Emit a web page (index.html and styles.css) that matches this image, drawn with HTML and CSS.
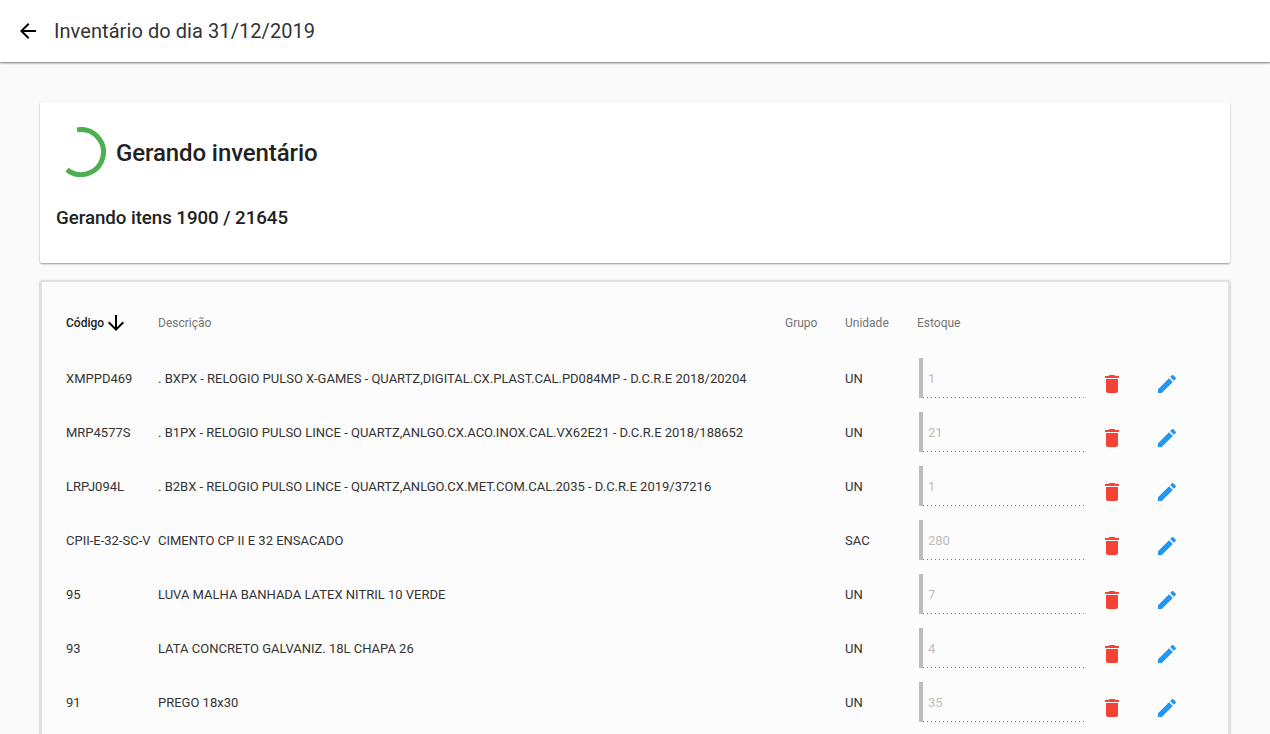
FILE: index.html
```html
<!DOCTYPE html>
<html lang="pt">
<head>
    <meta charset="UTF-8">
    <title>Inventário do dia 31/12/2019</title>
    <link rel="stylesheet" href="styles.css">
</head>
<body>
    <header class="toolbar">
        <svg class="back-icon" viewBox="0 0 24 24"><path d="M20 11H7.83l5.59-5.59L12 4l-8 8 8 8 1.41-1.41L7.83 13H20v-2z"/></svg>
        <span class="toolbar-title">Inventário do dia 31/12/2019</span>
    </header>
    <main class="content">
        <section class="card status-card">
            <div class="status-head">
                <svg class="spinner" viewBox="0 0 50 50"><path d="M21 2.9 A22.5 22.5 0 1 1 11 42.7"/></svg>
                <h2>Gerando inventário</h2>
            </div>
            <h3 class="status-text">Gerando itens 1900 / 21645</h3>
        </section>
        <section class="card list-card">
            <div class="row head-row">
                <div class="sorted">Código<svg class="sort-icon" viewBox="0 0 24 24"><path d="M20 12l-1.41-1.41L13 16.17V4h-2v12.17l-5.58-5.59L4 12l8 8 8-8z"/></svg></div>
                <div>Descrição</div>
                <div>Grupo</div>
                <div>Unidade</div>
                <div>Estoque</div>
            </div>
            <div class="row item-row">
                <div>XMPPD469</div>
                <div>. BXPX - RELOGIO PULSO X-GAMES - QUARTZ,DIGITAL.CX.PLAST.CAL.PD084MP - D.C.R.E 2018/20204</div>
                <div></div>
                <div>UN</div>
                <div class="stock">1</div>
                <svg class="icon trash" viewBox="0 0 24 24"><path d="M6 19c0 1.1.9 2 2 2h8c1.1 0 2-.9 2-2V7H6v12zM19 4h-3.5l-1-1h-5l-1 1H5v2h14V4z"/></svg>
                <svg class="icon pencil" viewBox="0 0 24 24"><path d="M3 17.25V21h3.75L17.81 9.94l-3.75-3.75L3 17.25zM20.71 7.04c.39-.39.39-1.02 0-1.41l-2.34-2.34c-.39-.39-1.02-.39-1.41 0l-1.83 1.83 3.75 3.75 1.83-1.83z"/></svg>
            </div>
            <div class="row item-row">
                <div>MRP4577S</div>
                <div>. B1PX - RELOGIO PULSO LINCE - QUARTZ,ANLGO.CX.ACO.INOX.CAL.VX62E21 - D.C.R.E 2018/188652</div>
                <div></div>
                <div>UN</div>
                <div class="stock">21</div>
                <svg class="icon trash" viewBox="0 0 24 24"><path d="M6 19c0 1.1.9 2 2 2h8c1.1 0 2-.9 2-2V7H6v12zM19 4h-3.5l-1-1h-5l-1 1H5v2h14V4z"/></svg>
                <svg class="icon pencil" viewBox="0 0 24 24"><path d="M3 17.25V21h3.75L17.81 9.94l-3.75-3.75L3 17.25zM20.71 7.04c.39-.39.39-1.02 0-1.41l-2.34-2.34c-.39-.39-1.02-.39-1.41 0l-1.83 1.83 3.75 3.75 1.83-1.83z"/></svg>
            </div>
            <div class="row item-row">
                <div>LRPJ094L</div>
                <div>. B2BX - RELOGIO PULSO LINCE - QUARTZ,ANLGO.CX.MET.COM.CAL.2035 - D.C.R.E 2019/37216</div>
                <div></div>
                <div>UN</div>
                <div class="stock">1</div>
                <svg class="icon trash" viewBox="0 0 24 24"><path d="M6 19c0 1.1.9 2 2 2h8c1.1 0 2-.9 2-2V7H6v12zM19 4h-3.5l-1-1h-5l-1 1H5v2h14V4z"/></svg>
                <svg class="icon pencil" viewBox="0 0 24 24"><path d="M3 17.25V21h3.75L17.81 9.94l-3.75-3.75L3 17.25zM20.71 7.04c.39-.39.39-1.02 0-1.41l-2.34-2.34c-.39-.39-1.02-.39-1.41 0l-1.83 1.83 3.75 3.75 1.83-1.83z"/></svg>
            </div>
            <div class="row item-row">
                <div>CPII-E-32-SC-V</div>
                <div>CIMENTO CP II E 32 ENSACADO</div>
                <div></div>
                <div>SAC</div>
                <div class="stock">280</div>
                <svg class="icon trash" viewBox="0 0 24 24"><path d="M6 19c0 1.1.9 2 2 2h8c1.1 0 2-.9 2-2V7H6v12zM19 4h-3.5l-1-1h-5l-1 1H5v2h14V4z"/></svg>
                <svg class="icon pencil" viewBox="0 0 24 24"><path d="M3 17.25V21h3.75L17.81 9.94l-3.75-3.75L3 17.25zM20.71 7.04c.39-.39.39-1.02 0-1.41l-2.34-2.34c-.39-.39-1.02-.39-1.41 0l-1.83 1.83 3.75 3.75 1.83-1.83z"/></svg>
            </div>
            <div class="row item-row">
                <div>95</div>
                <div>LUVA MALHA BANHADA LATEX NITRIL 10 VERDE</div>
                <div></div>
                <div>UN</div>
                <div class="stock">7</div>
                <svg class="icon trash" viewBox="0 0 24 24"><path d="M6 19c0 1.1.9 2 2 2h8c1.1 0 2-.9 2-2V7H6v12zM19 4h-3.5l-1-1h-5l-1 1H5v2h14V4z"/></svg>
                <svg class="icon pencil" viewBox="0 0 24 24"><path d="M3 17.25V21h3.75L17.81 9.94l-3.75-3.75L3 17.25zM20.71 7.04c.39-.39.39-1.02 0-1.41l-2.34-2.34c-.39-.39-1.02-.39-1.41 0l-1.83 1.83 3.75 3.75 1.83-1.83z"/></svg>
            </div>
            <div class="row item-row">
                <div>93</div>
                <div>LATA CONCRETO GALVANIZ. 18L CHAPA 26</div>
                <div></div>
                <div>UN</div>
                <div class="stock">4</div>
                <svg class="icon trash" viewBox="0 0 24 24"><path d="M6 19c0 1.1.9 2 2 2h8c1.1 0 2-.9 2-2V7H6v12zM19 4h-3.5l-1-1h-5l-1 1H5v2h14V4z"/></svg>
                <svg class="icon pencil" viewBox="0 0 24 24"><path d="M3 17.25V21h3.75L17.81 9.94l-3.75-3.75L3 17.25zM20.71 7.04c.39-.39.39-1.02 0-1.41l-2.34-2.34c-.39-.39-1.02-.39-1.41 0l-1.83 1.83 3.75 3.75 1.83-1.83z"/></svg>
            </div>
            <div class="row item-row">
                <div>91</div>
                <div>PREGO 18x30</div>
                <div></div>
                <div>UN</div>
                <div class="stock">35</div>
                <svg class="icon trash" viewBox="0 0 24 24"><path d="M6 19c0 1.1.9 2 2 2h8c1.1 0 2-.9 2-2V7H6v12zM19 4h-3.5l-1-1h-5l-1 1H5v2h14V4z"/></svg>
                <svg class="icon pencil" viewBox="0 0 24 24"><path d="M3 17.25V21h3.75L17.81 9.94l-3.75-3.75L3 17.25zM20.71 7.04c.39-.39.39-1.02 0-1.41l-2.34-2.34c-.39-.39-1.02-.39-1.41 0l-1.83 1.83 3.75 3.75 1.83-1.83z"/></svg>
            </div>
        </section>
    </main>
</body>
</html>
```

FILE: styles.css
```css
html, body {
    height: 100%;
    overflow: hidden;
}
body {
    margin: 0;
    background-color: #fafafa;
    font-family: 'Roboto', sans-serif;
    color: #212121;
}
.toolbar {
    height: 62px;
    display: flex;
    align-items: center;
    padding-left: 16px;
    background-color: #fff;
    box-shadow: 0 1px 2px rgba(0, 0, 0, 0.55);
}
.back-icon {
    width: 24px;
    height: 24px;
    margin-right: 14px;
    fill: #000;
}
.toolbar-title {
    padding-bottom: 1px;
    font-size: 20px;
    letter-spacing: 0.07px;
    color: #333;
}
.content {
    padding: 40px 40px 0;
}
.card {
    border-radius: 2px;
    box-shadow: 0 1px 2px rgba(0, 0, 0, 0.4);
}
.status-card {
    height: 161px;
    box-sizing: border-box;
    padding: 23px 16px 0;
    background-color: #fff;
    margin-bottom: 17px;
}
.status-head {
    display: flex;
    align-items: center;
    height: 54px;
}
.spinner {
    width: 50px;
    height: 50px;
    margin-right: 10px;
    fill: none;
    stroke: #4caf50;
    stroke-width: 5px;
}
.status-head h2 {
    margin: 0;
    padding-top: 2px;
    font-size: 24px;
    font-weight: 500;
    letter-spacing: -0.1px;
}
.status-text {
    margin: 27px 0 0;
    font-size: 18.72px;
    font-weight: 500;
    letter-spacing: -0.05px;
    line-height: 24px;
}
.list-card {
    border: 2px solid #e0e0e0;
    border-bottom: 0;
    padding: 14px 0 40px 24px;
    background-color: #fcfcfc;
}
.row {
    display: grid;
    grid-template-columns: 92px 627px 60px 72px 168px 55px 55px;
    align-items: center;
    font-size: 13px;
    color: #333;
}
.head-row {
    height: 54px;
    margin-bottom: 1px;
    font-size: 12px;
    color: #757575;
}
.sorted {
    display: flex;
    align-items: center;
    font-weight: 500;
    color: #212121;
}
.sort-icon {
    width: 24px;
    height: 24px;
    fill: #000;
}
.item-row {
    height: 54px;
}
.stock {
    box-sizing: border-box;
    height: 40px;
    margin-left: 2px;
    padding-left: 5px;
    display: flex;
    align-items: center;
    border-left: 4px solid #bdbdbd;
    background-image: linear-gradient(to right, #757575 25%, transparent 25%);
    background-size: 4px 1px;
    background-repeat: repeat-x;
    background-position: bottom left;
    color: #bdbdbd;
}
.icon {
    width: 24px;
    height: 24px;
    margin-top: 12px;
}
.trash {
    margin-left: 15px;
    fill: #f44336;
}
.pencil {
    margin-left: 15px;
    fill: #2196f3;
}
```
